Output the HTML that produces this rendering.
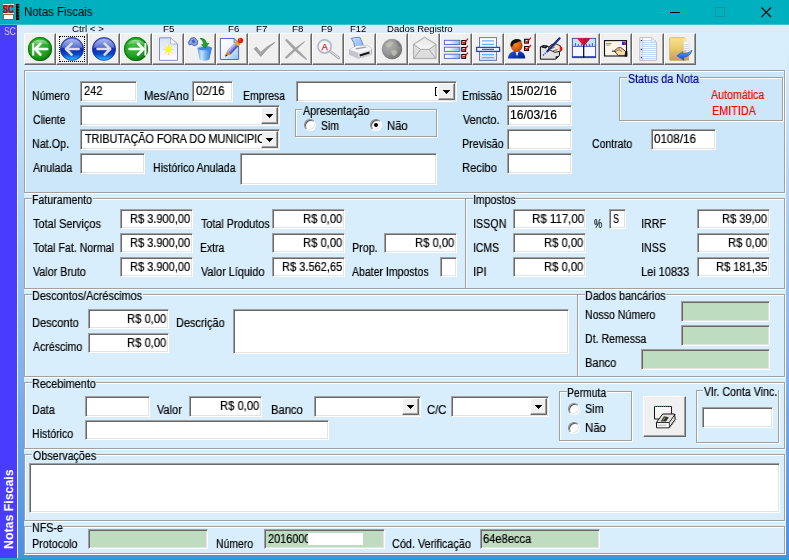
<!DOCTYPE html>
<html lang="pt-BR">
<head>
<meta charset="utf-8">
<title>Notas Fiscais</title>
<style>
*{box-sizing:border-box;margin:0;padding:0}
html,body{width:789px;height:560px;overflow:hidden}
body{position:relative;background:linear-gradient(to bottom,#d8eefc 0,#d8eefc 50px,#4a90e2 558px,#4a90e2 100%);font-family:"Liberation Sans",Arial,sans-serif;font-size:12px;color:#000;line-height:13px}
.abs,.l,.in,.gb,.gp,.tb,.rd{position:absolute}
i{font-style:normal;display:block}
#title{position:absolute;left:0;top:0;width:789px;height:25px;background:#00b0be;border-bottom:1px solid #3ebfca}
#side{position:absolute;left:0;top:25px;width:17px;height:535px;background:#4a3cff}
#side .v{position:absolute;left:1px;top:524px;transform-origin:0 0;transform:rotate(-90deg) scaleX(.95);color:#fff;font-weight:bold;font-size:13px;white-space:nowrap;line-height:15px}
#sline{position:absolute;left:17px;top:25px;width:1px;height:535px;background:#f4fafe}
#ct{position:absolute;left:24px;top:25px;width:762px;height:530px;background:#d8eefc}
#bb{position:absolute;left:0;top:558px;width:789px;height:2px;background:#00b0be;border-top:1px solid #2aa0d0}
.l{white-space:nowrap;height:13px;transform-origin:0 0;will-change:transform;-webkit-text-stroke:.2px currentColor}
.tb{top:33px;width:32px;height:32px;background:#f0f0f0;border:1px solid;border-color:#fff #696969 #696969 #fff;box-shadow:inset -1px -1px 0 #a0a0a0}
.fr{position:absolute;left:2px;top:2px;width:26px;height:26px;border:1px dotted #000}
.in{background:#fff;border:1px solid;border-color:#a0a0a0 #fff #fff #a0a0a0;box-shadow:inset 1px 1px 0 #696969,inset -1px -1px 0 #e3e3e3}
.in.g{background:#bddcc0}
.gb{border:1px solid #a0a0a0;box-shadow:1px 1px 0 #fff,inset 1px 1px 0 #fff}
.gp{height:4px}
.cbb{position:absolute;right:1px;top:1px;bottom:1px;width:17px;background:#f0f0f0;border:1px solid;border-color:#fff #696969 #696969 #fff;box-shadow:inset -1px -1px 0 #a0a0a0}
.cbb:after{content:"";position:absolute;left:4px;top:6px;width:7px;height:4px;background:linear-gradient(#000,#000) 0 0/7px 1px no-repeat,linear-gradient(#000,#000) 1px 1px/5px 1px no-repeat,linear-gradient(#000,#000) 2px 2px/3px 1px no-repeat,linear-gradient(#000,#000) 3px 3px/1px 1px no-repeat}
.brk{position:absolute;width:2px;height:9px;border:1px solid #000;border-right:0}
.ic{position:absolute;left:0;top:0;display:block}
.rd{width:12px;height:12px;border-radius:50%;background:#fff;border:1px solid;border-color:#8a8a8a #fff #fff #8a8a8a;box-shadow:inset 1px 1px 0 #5c5c5c,inset -1px -1px 0 #e4e4e4;transform:rotate(0deg)}
.rd.on:after{content:"";position:absolute;left:3px;top:3px;width:4px;height:4px;border-radius:50%;background:#000}
</style>
</head>
<body>
<div id="title"><svg style="position:absolute;left:0;top:0" width="24" height="25" viewBox="0 0 24 25"><rect x="3" y="4" width="11" height="10" fill="#00a8b6"/><path d="M3 4.5H14" stroke="#fff" stroke-width="1"/>
<text x="3" y="13.2" font-family="Liberation Sans,sans-serif" font-size="11.5" font-weight="bold" fill="#e00000" stroke="#b00000" stroke-width=".5" textLength="10.8" lengthAdjust="spacingAndGlyphs">SC</text>
<rect x="3.5" y="14.5" width="10" height="5" fill="#fff" stroke="#8c5c4c" stroke-width="1"/><path d="M3 13.6H14" stroke="#f4f4f4" stroke-width="1"/>
<rect x="16" y="4" width="3.2" height="16" fill="#000"/><path d="M17.6 5.6H19.2M17.6 8.4H19.2M17.8 11.4H19.2M17.8 14H19.2M17.4 17.6H18.4" stroke="#00b0be" stroke-width=".9"/></svg><svg style="position:absolute;left:640px;top:0" width="149" height="25" viewBox="640 0 149 25"><path d="M670 12.5H680" stroke="#000" stroke-width="1"/><rect x="715.5" y="7.5" width="9" height="9" fill="none" stroke="#0a98a4" stroke-width="1"/><path d="M761.5 7.5L771 17M771 7.5L761.5 17" stroke="#000" stroke-width="1.1"/></svg></div>
<div id="side"><span class="v">Notas Fiscais</span></div>
<div id="sline"></div>
<div id="ct"></div>
<div id="bb"></div>
<div class="tb" style="left:24px"><svg class="ic" width="29" height="29" viewBox="25 34 29 29"><defs><radialGradient id="g0" cx="0.42" cy="0.38" r="0.62"><stop offset="0" stop-color="#40c040"/><stop offset="0.6" stop-color="#25a825"/><stop offset="0.88" stop-color="#158c15"/><stop offset="1" stop-color="#0b6e0b"/></radialGradient><linearGradient id="gl0" x1="0" y1="0" x2="0" y2="1"><stop offset="0" stop-color="#fff" stop-opacity=".55"/><stop offset="1" stop-color="#fff" stop-opacity=".08"/></linearGradient></defs><circle cx="40" cy="49" r="12" fill="url(#g0)"/><circle cx="40" cy="49" r="11.6" fill="none" stroke="#0a6c0a" stroke-width=".9"/><path d="M30.8 45.5 A10 9.5 0 0 1 49.2 45.5 Q40 41.5 30.8 45.5Z" fill="url(#gl0)"/><path d="M33.2 43.2V55.6" stroke="#fff" stroke-width="2" fill="none"/><path d="M35 49H47.2M40.4 43.6L35.2 49L40.4 54.6" stroke="#fff" stroke-width="2.6" fill="none" stroke-linecap="round" stroke-linejoin="round"/></svg></div>
<div class="tb" style="left:56px"><i class="fr"></i><svg class="ic" width="29" height="29" viewBox="57 34 29 29"><defs><linearGradient id="b1" x1="0" y1="0" x2="0" y2="1"><stop offset="0" stop-color="#6078d8"/><stop offset="0.42" stop-color="#3550c4"/><stop offset="0.5" stop-color="#0c2cb0"/><stop offset="0.72" stop-color="#0c44cc"/><stop offset="0.92" stop-color="#28a8f8"/><stop offset="1" stop-color="#48d0ff"/></linearGradient><linearGradient id="bl1" x1="0" y1="0" x2="0" y2="1"><stop offset="0" stop-color="#fff" stop-opacity=".5"/><stop offset="1" stop-color="#fff" stop-opacity=".12"/></linearGradient></defs><circle cx="72" cy="49" r="11.8" fill="url(#b1)"/><circle cx="72" cy="49" r="11.4" fill="none" stroke="#1a2c9c" stroke-width=".9" stroke-opacity=".8"/><path d="M61.6 47.5 A10.5 10.2 0 0 1 82.4 47.5 Q72 50 61.6 47.5Z" fill="url(#bl1)"/><path d="M66.4 49H78.6M71.6 43.6L66 49L71.6 54.6" stroke="#dedede" stroke-width="2.6" fill="none" stroke-linecap="round" stroke-linejoin="round"/></svg></div>
<div class="tb" style="left:88px"><svg class="ic" width="29" height="29" viewBox="89 34 29 29"><defs><linearGradient id="b2" x1="0" y1="0" x2="0" y2="1"><stop offset="0" stop-color="#6078d8"/><stop offset="0.42" stop-color="#3550c4"/><stop offset="0.5" stop-color="#0c2cb0"/><stop offset="0.72" stop-color="#0c44cc"/><stop offset="0.92" stop-color="#28a8f8"/><stop offset="1" stop-color="#48d0ff"/></linearGradient><linearGradient id="bl2" x1="0" y1="0" x2="0" y2="1"><stop offset="0" stop-color="#fff" stop-opacity=".5"/><stop offset="1" stop-color="#fff" stop-opacity=".12"/></linearGradient></defs><circle cx="104" cy="49" r="11.8" fill="url(#b2)"/><circle cx="104" cy="49" r="11.4" fill="none" stroke="#1a2c9c" stroke-width=".9" stroke-opacity=".8"/><path d="M93.6 47.5 A10.5 10.2 0 0 1 114.4 47.5 Q104 50 93.6 47.5Z" fill="url(#bl2)"/><path d="M97.6 49H109.8M104.6 43.6L110.2 49L104.6 54.6" stroke="#dedede" stroke-width="2.6" fill="none" stroke-linecap="round" stroke-linejoin="round"/></svg></div>
<div class="tb" style="left:120px"><svg class="ic" width="29" height="29" viewBox="121 34 29 29"><defs><radialGradient id="g3" cx="0.42" cy="0.38" r="0.62"><stop offset="0" stop-color="#40c040"/><stop offset="0.6" stop-color="#25a825"/><stop offset="0.88" stop-color="#158c15"/><stop offset="1" stop-color="#0b6e0b"/></radialGradient><linearGradient id="gl3" x1="0" y1="0" x2="0" y2="1"><stop offset="0" stop-color="#fff" stop-opacity=".55"/><stop offset="1" stop-color="#fff" stop-opacity=".08"/></linearGradient></defs><circle cx="136" cy="49" r="12" fill="url(#g3)"/><circle cx="136" cy="49" r="11.6" fill="none" stroke="#0a6c0a" stroke-width=".9"/><path d="M126.8 45.5 A10 9.5 0 0 1 145.2 45.5 Q136 41.5 126.8 45.5Z" fill="url(#gl3)"/><path d="M145.4 43.2V55.6" stroke="#fff" stroke-width="2" fill="none"/><path d="M129.6 49H143.4M138 43.6L143.4 49L138 54.6" stroke="#fff" stroke-width="2.6" fill="none" stroke-linecap="round" stroke-linejoin="round"/></svg></div>
<div class="tb" style="left:152px"><svg class="ic" width="29" height="29" viewBox="153 34 29 29"><defs><linearGradient id="p4" x1="0" y1="0" x2="0" y2="1"><stop offset="0" stop-color="#d4e2f8"/><stop offset=".6" stop-color="#eef4fd"/><stop offset="1" stop-color="#ffffff"/></linearGradient></defs><path d="M159.5 37.8H170.5L177.5 44V60.3H159.5Z" fill="url(#p4)" stroke="#8a8cc0" stroke-width="1"/>
<path d="M170.5 37.8V44H177.5Z" fill="#f4f8ff" stroke="#a8aad0" stroke-width=".8"/>
<g stroke="#ffee00" stroke-width="1" stroke-linecap="round"><path d="M168.5 44.2V54.8M163.4 49.5H173.6M164.9 45.9L172.1 53.1M172.1 45.9L164.9 53.1"/></g>
<circle cx="168.5" cy="49.5" r="2.7" fill="#ffff00"/></svg></div>
<div class="tb" style="left:184px"><svg class="ic" width="29" height="29" viewBox="185 34 29 29"><defs><linearGradient id="k5" x1="0" y1="0" x2="1" y2="0"><stop offset="0" stop-color="#5aa0f0"/><stop offset=".3" stop-color="#c4e4ff"/><stop offset=".55" stop-color="#78b8f8"/><stop offset="1" stop-color="#2a70dc"/></linearGradient></defs><path d="M188.3 42.5L191 38.2L194.5 37.6L197.6 40.8L197.2 44.6L194.2 45.8L191.2 44.2L189.4 45Z" fill="#8aa4dc" stroke="#4a58a8" stroke-width=".9"/>
<path d="M191.5 40.5L194 39.6L195.6 42.2L193 43.4Z" fill="#3c64c8"/>
<path d="M197.4 48.2Q197 46.4 204.5 46.2Q212.2 46.4 211.8 48.4L209.4 59.4Q204.5 62 199.6 59.4Z" fill="url(#k5)"/>
<ellipse cx="204.6" cy="48.2" rx="7.2" ry="2.1" fill="#4486e6"/><path d="M197.6 48.4Q199 46.6 203 46.4" stroke="#d8ecff" stroke-width=".8" fill="none"/>
<path d="M200 38.4Q205.6 38 206.6 43.6L208.8 43.2L205 48.4L201.4 44.6L203.6 44.2Q203.4 40.6 200 38.4Z" fill="#22a030" stroke="#107018" stroke-width=".6"/></svg></div>
<div class="tb" style="left:216px"><svg class="ic" width="29" height="29" viewBox="217 34 29 29"><defs><linearGradient id="p6" x1="0" y1="0" x2="1" y2="1"><stop offset="0" stop-color="#ffffff"/><stop offset=".45" stop-color="#f0f6fd"/><stop offset="1" stop-color="#84c0ee"/></linearGradient></defs><path d="M220.4 38.5H234L238.6 43V59.5H220.4Z" fill="url(#p6)" stroke="#5868c0" stroke-width="1"/>
<path d="M234 38.5V43H238.6Z" fill="#a8d0f4" stroke="#5868c0" stroke-width=".7"/>
<path d="M227 51.1L235 42.8L238.4 46.2L230.4 54.5Z" fill="#8686d6"/>
<path d="M227 51.1L235 42.8L236.1 43.9L228.1 52.2Z" fill="#b6b6f2"/>
<path d="M229.3 53.4L237.3 45.1L238.4 46.2L230.4 54.5Z" fill="#5656a6"/>
<path d="M225.2 56.4L227 51.1L230.4 54.5Z" fill="#d89018"/>
<path d="M225.2 56.4L225.9 54.3L227.3 55.7Z" fill="#181008"/>
<path d="M235 42.8L237.1 40.7L240.5 44.1L238.4 46.2Z" fill="#f2b000"/>
<path d="M236.4 41.4L237.1 40.7L240.5 44.1L239.8 44.8Z" fill="#c88800"/>
<ellipse cx="240.5" cy="40.5" rx="2.7" ry="2.7" fill="#d81c0c"/>
<circle cx="239.8" cy="39.6" r="1.1" fill="#f8583c"/></svg></div>
<div class="tb" style="left:248px"><svg class="ic" width="29" height="29" viewBox="249 34 29 29"><defs></defs><path d="M254.2 48.7L256.3 47L260.7 52.4Q266.6 46.2 274.9 42.3Q267.6 48 260.8 56.5Z" fill="#a6a6a6" stroke="#7c7c7c" stroke-width=".55" stroke-linejoin="round"/></svg></div>
<div class="tb" style="left:280px"><svg class="ic" width="29" height="29" viewBox="281 34 29 29"><defs></defs><path d="M285.4 40.4Q285.4 38.8 287.2 39.2Q296 47.6 307.2 59L306.4 60Q294.4 51.6 285.4 40.4Z" fill="#a4a4a4"/>
<path d="M285 57.2Q293.6 48 304.6 41L305 41.8Q296.8 49.8 287 58.4Q285 58.8 285 57.2Z" fill="#a4a4a4"/></svg></div>
<div class="tb" style="left:312px"><svg class="ic" width="29" height="29" viewBox="313 34 29 29"><defs><radialGradient id="m9" cx=".5" cy=".5" r=".5"><stop offset="0" stop-color="#ffffff"/><stop offset=".7" stop-color="#f2f7fe"/><stop offset="1" stop-color="#cfe0f8"/></radialGradient></defs><path d="M330 51.2L338.6 57.8" stroke="#9898a4" stroke-width="2.6" stroke-linecap="round"/>
<path d="M330.4 51.4L338.4 57.6" stroke="#ececf4" stroke-width="1.2" stroke-linecap="round"/>
<circle cx="324.6" cy="46.4" r="6.7" fill="url(#m9)" stroke="#b4b4bc" stroke-width="1.5"/>
<text x="324.7" y="49.8" font-family="Liberation Sans,sans-serif" font-size="9" fill="#f00" stroke="#f00" stroke-width=".25" text-anchor="middle">A</text></svg></div>
<div class="tb" style="left:344px"><svg class="ic" width="29" height="29" viewBox="345 34 29 29"><defs><linearGradient id="pp10" x1="0" y1="0" x2="1" y2="1"><stop offset="0" stop-color="#c8defc"/><stop offset="1" stop-color="#7cb0f4"/></linearGradient></defs><path d="M351.2 38.4Q353.6 37.2 360 37.4Q361.8 41.6 363.6 46.4L354.8 48Q354.6 42 351.2 38.4Z" fill="url(#pp10)" stroke="#5a6ad0" stroke-width=".8"/>
<path d="M349.4 49.6L357 45.8L367.2 45.4L371.6 49L371.4 53.8L358.4 58.2L349.6 54.4Z" fill="#e4e4e8" stroke="#9c9ca4" stroke-width=".7"/>
<path d="M349.4 49.6L358.4 53L371.6 49L367.2 45.4L357 45.8Z" fill="#f6f6f8"/>
<path d="M355.2 48.2L365.6 46.6L366.8 47.6L356.6 49.4Z" fill="#a0a0a8"/>
<path d="M359.4 54.6L369.4 51.6L369.6 53.6L360 56.6Z" fill="#101010"/>
<path d="M349.6 54.4L358.4 58.2V53L349.4 49.6Z" fill="#c4c4cc"/>
<path d="M361 57.4L371.6 54L371.8 55.2L362 58.6Z" fill="#d8d8dc"/></svg></div>
<div class="tb" style="left:376px"><svg class="ic" width="29" height="29" viewBox="377 34 29 29"><defs><radialGradient id="gb11" cx=".38" cy=".36" r=".72"><stop offset="0" stop-color="#b0b0b0"/><stop offset=".55" stop-color="#969696"/><stop offset="1" stop-color="#6c6c6c"/></radialGradient></defs><circle cx="392" cy="49" r="10.3" fill="url(#gb11)"/>
<path d="M386 44.2L389.4 41.4L393.6 42.2L391.6 45.6L388.4 47.6L386.4 47Z" fill="#bcbcb4"/>
<path d="M391 50.8L395.6 49.8L397.2 52.6L394.2 56.4L392.2 54.6Z" fill="#b8b8b0"/>
<path d="M395.5 40.6Q400.6 43 401.6 47.6L398.4 46.4Z" fill="#7c7c7c"/></svg></div>
<div class="tb" style="left:408px"><svg class="ic" width="29" height="29" viewBox="409 34 29 29"><defs></defs><path d="M413.6 44.2L424.6 37.2L436 44.2V58.6H413.6Z" fill="#dedede" stroke="#a8a8a8" stroke-width="1" stroke-linejoin="round"/>
<path d="M415.4 44.4L424.6 38.8L434.4 44.6L429 49.2H420.6Z" fill="#ececec"/>
<path d="M415.4 43.4Q424 46 434.2 45.2L429 49.2H420.6Z" fill="#f4f4f4"/>
<path d="M413.8 44.4L420.6 49.4H429L435.8 44.6M420.6 49.4L414 58.4M429 49.4L435.6 58.4" fill="none" stroke="#a8a8a8" stroke-width="1"/></svg></div>
<div class="tb" style="left:440px"><svg class="ic" width="29" height="29" viewBox="441 34 29 29"><defs><linearGradient id="br13" x1="0" y1="0" x2="1" y2="0"><stop offset="0" stop-color="#ffffff"/><stop offset=".35" stop-color="#e8f2fd"/><stop offset="1" stop-color="#86baf0"/></linearGradient></defs><rect x="444.4" y="40.3" width="15.4" height="4.2" fill="url(#br13)" stroke="#4a66c4" stroke-width=".9"/><rect x="461.8" y="40.599999999999994" width="3.8" height="3.8" fill="#fff" stroke="#000" stroke-width="1.1"/><path d="M462.6 41.9L464 43.5L468 38.699999999999996" fill="none" stroke="#f00000" stroke-width="1.2"/><rect x="444.4" y="47.2" width="15.4" height="4.2" fill="url(#br13)" stroke="#4a66c4" stroke-width=".9"/><rect x="461.8" y="47.5" width="3.8" height="3.8" fill="#fff" stroke="#000" stroke-width="1.1"/><path d="M462.6 48.800000000000004L464 50.400000000000006L468 45.6" fill="none" stroke="#f00000" stroke-width="1.2"/><rect x="444.4" y="54.2" width="15.4" height="4.2" fill="url(#br13)" stroke="#4a66c4" stroke-width=".9"/><rect x="461.8" y="54.5" width="3.8" height="3.8" fill="#fff" stroke="#000" stroke-width="1.1"/><path d="M462.6 55.800000000000004L464 57.400000000000006L468 52.6" fill="none" stroke="#f00000" stroke-width="1.2"/></svg></div>
<div class="tb" style="left:472px"><svg class="ic" width="29" height="29" viewBox="473 34 29 29"><defs><linearGradient id="p14" x1="0" y1="0" x2="0" y2="1"><stop offset="0" stop-color="#ffffff"/><stop offset=".5" stop-color="#f0f6fd"/><stop offset="1" stop-color="#cfe2f6"/></linearGradient></defs><rect x="479.5" y="37.6" width="17" height="22.8" fill="url(#p14)" stroke="#7476b4" stroke-width="1"/>
<g stroke="#6cb0f4" stroke-width="1.2"><path d="M482 40.8H494M482 44.3H494M482 54.6H494M482 57.7H494"/></g>
<rect x="476.6" y="47.4" width="23" height="4" fill="#f4f6fa" stroke="#2c48a8" stroke-width="1.3"/>
<path d="M482 49.4H494" stroke="#3c62c8" stroke-width="1.3"/></svg></div>
<div class="tb" style="left:504px"><svg class="ic" width="29" height="29" viewBox="505 34 29 29"><defs><radialGradient id="hd15" cx=".4" cy=".4" r=".7"><stop offset="0" stop-color="#f88a1c"/><stop offset=".6" stop-color="#dc5c08"/><stop offset="1" stop-color="#8c2c00"/></radialGradient><linearGradient id="bd15" x1="0" y1="0" x2="1" y2="1"><stop offset="0" stop-color="#3060e0"/><stop offset=".5" stop-color="#1038c0"/><stop offset="1" stop-color="#041c84"/></linearGradient></defs><path d="M508 58.6Q508 53.4 513 51.6L516.6 50.4L520.6 51.6Q525.4 53.4 525.2 58.6Z" fill="url(#bd15)"/>
<path d="M515.4 51L517 56.6L518.8 51Z" fill="#f4f4f8"/>
<ellipse cx="516.6" cy="45.6" rx="5.9" ry="6.3" fill="url(#hd15)"/>
<path d="M510.6 46.4Q509.8 40.4 515 39.2Q519.6 38.2 522 41.4Q518.4 40.6 516.4 43Q513.4 42.8 512.4 46.6Z" fill="#101010"/><rect x="524.6" y="39.3" width="3.8" height="3.8" fill="#fff" stroke="#000" stroke-width="1.1"/><path d="M525.2 40.699999999999996L526.8 42.3L531 37.699999999999996" fill="none" stroke="#f00000" stroke-width="1.2"/><rect x="524.6" y="46.6" width="3.8" height="3.8" fill="#fff" stroke="#000" stroke-width="1.1"/><path d="M525.2 48.0L526.8 49.6L531 45.0" fill="none" stroke="#f00000" stroke-width="1.2"/></svg></div>
<div class="tb" style="left:536px"><svg class="ic" width="29" height="29" viewBox="537 34 29 29"><defs></defs><path d="M540.4 46.8L544 45.4L557.6 49.6L559.4 51.6V55.6L555.6 59.2H540.4Z" fill="#e2e2e2" stroke="#101010" stroke-width="1"/>
<path d="M555.4 59L555.6 56.4L559 55.8Z" fill="#101010"/>
<path d="M541.6 46.6L545.6 47.6L547.4 45.6" fill="none" stroke="#101010" stroke-width="1.6"/>
<path d="M548.6 47.4Q551.2 43.4 555.6 43.8L560.4 45.8L561 51L555 52.4L549.4 49.8Z" fill="#f6e4d0" stroke="#181818" stroke-width=".9"/>
<path d="M550.4 48.6L554.6 47.4M551.4 46L555.4 45.6M553 51L557.6 49.6" stroke="#303030" stroke-width=".7" fill="none"/>
<path d="M559.6 46.2Q562.8 46.6 562.4 49.6Q562 51.6 559.8 51.4Z" fill="#e81010"/>
<path d="M559.6 38.2L547.4 51.2" stroke="#0c1470" stroke-width="2" stroke-linecap="round"/><path d="M559.2 38.8L548 50.8" stroke="#3850d8" stroke-width=".7"/>
<path d="M547.4 51.2L542.4 56" stroke="#2840ff" stroke-width="1.3" stroke-dasharray="1.4 1"/></svg></div>
<div class="tb" style="left:568px"><svg class="ic" width="29" height="29" viewBox="569 34 29 29"><defs></defs><rect x="572.4" y="38.4" width="23.2" height="18.6" fill="#f6f8fe" stroke="#3848b8" stroke-width="1"/>
<rect x="572.9" y="38.9" width="22.2" height="7.2" fill="#c4e0fa"/>
<g stroke="#3c50c0" stroke-width=".9"><path d="M575.4 43V46.4M578.4 44V46.4M581.4 44V46.4M586.4 44V46.4M589.4 44V46.4M592.4 43V46.4M572.9 46.4H595.1"/></g>
<path d="M572 57.2H596" stroke="#3040b0" stroke-width="1.8"/>
<path d="M577 38.2H590.4L583.7 46.2Z" fill="#e81030"/>
<path d="M583.7 38.2H590.4L583.7 46.2Z" fill="#b01840"/>
<path d="M583.7 45.6V57.8" stroke="#000" stroke-width="1.2"/></svg></div>
<div class="tb" style="left:600px"><svg class="ic" width="29" height="29" viewBox="601 34 29 29"><defs></defs><rect x="604.5" y="40.6" width="22" height="15.4" fill="#fff6ea" stroke="#101010" stroke-width="1.1"/>
<path d="M606 43.4H611.6M606 45H610.4" stroke="#909090" stroke-width="1"/>
<rect x="622" y="41.6" width="3.8" height="3.4" fill="#2828e0"/><rect x="624" y="41.8" width="1.4" height="2.6" fill="#e82020"/>
<path d="M612 51.2H616" stroke="#101010" stroke-width="1"/>
<path d="M614.8 50.6Q617.6 46.8 620.8 47.6L625.6 51.4L626.6 55.6L618.6 55.6Q615.4 53.6 614.8 50.6Z" fill="#f8d8a4" stroke="#101010" stroke-width=".8"/>
<path d="M625.4 51.2H627.4V56.4H624.4Z" fill="#101010"/>
<path d="M616.4 51.2L619 49.6L621.6 51.4" fill="none" stroke="#404040" stroke-width=".7"/></svg></div>
<div class="tb" style="left:632px"><svg class="ic" width="29" height="29" viewBox="633 34 29 29"><defs></defs><path d="M639.8 37.6H651.6L656.6 42.4V60.4H639.8Z" fill="#fff" stroke="#bcbcbc" stroke-width="1"/>
<path d="M640.4 40.6H656M640.4 42.6H656M640.4 44.6H656M640.4 46.6H656M640.4 48.6H656M640.4 50.6H656M640.4 52.6H656M640.4 54.6H656M640.4 56.6H656M640.4 58.6H656" stroke="#b4d0f0" stroke-width=".9"/>
<path d="M651.6 37.6V42.4H656.6Z" fill="#f0f0f0" stroke="#c4c4c4" stroke-width=".7"/>
<path d="M642.6 38V60" stroke="#f0b8a8" stroke-width=".8"/>
<circle cx="641.4" cy="40.6" r=".7" fill="#202020"/><circle cx="641.4" cy="49.4" r=".7" fill="#202020"/><circle cx="641.4" cy="57.6" r=".7" fill="#202020"/></svg></div>
<div class="tb" style="left:664px"><svg class="ic" width="29" height="29" viewBox="665 34 29 29"><defs><linearGradient id="f20" x1="0" y1="0" x2="0" y2="1"><stop offset="0" stop-color="#f8e488"/><stop offset=".5" stop-color="#e8c870"/><stop offset="1" stop-color="#c89c54"/></linearGradient><linearGradient id="f20b" x1="0" y1="0" x2="0" y2="1"><stop offset="0" stop-color="#e4c46c"/><stop offset="1" stop-color="#c89c54"/></linearGradient><linearGradient id="a20" x1="0" y1="0" x2="0" y2="1"><stop offset="0" stop-color="#60b0ff"/><stop offset="1" stop-color="#0848d0"/></linearGradient></defs><path d="M669.6 38.6Q669.6 37.6 670.6 37.6H684.4L685.4 38.6V60.4H670.6Q669.6 60.4 669.6 59.4Z" fill="url(#f20)" stroke="#c8a45c" stroke-width=".6"/>
<path d="M683.4 38.4H686.6V46H683.4Z" fill="#fbe6a8"/>
<path d="M684 41.4H686.8L688.8 43.4V56H684Z" fill="#fff" stroke="#d8d8e4" stroke-width=".5"/>
<path d="M684.4 44.6H688.4M684.4 46.6H688.4M684.4 48.6H688.4M684.4 50.6H688.4M684.4 52.6H688.4" stroke="#a8c8f0" stroke-width=".8"/>
<path d="M681 52.4L685 50.4L689 53.6V60.4H681Z" fill="url(#f20b)"/>
<path d="M692 50Q691 56.4 683.4 57.4L684 60.2L676.8 55.8L682.6 51.6L683 53.8Q688.4 54 692 50Z" fill="url(#a20)" stroke="#0c44c0" stroke-width=".5"/></svg></div>
<div class="gb" style="left:24px;top:70px;width:761px;height:123px;background:#cce7fa;"></div>
<div class="in " style="left:80px;top:81px;width:57px;height:21px"></div>
<div class="in " style="left:192px;top:81px;width:41px;height:21px"></div>
<div class="in" style="left:296px;top:81px;width:161px;height:21px"><i class="cbb"></i></div>
<i class="brk" style="left:435px;top:87px"></i>
<div class="in " style="left:507px;top:81px;width:65px;height:21px"></div>
<div class="gb" style="left:619px;top:77px;width:164px;height:44px;"></div>
<i class="gp" style="left:627px;top:75px;width:73px;background:#cce7fa"></i>
<div class="in" style="left:80px;top:105px;width:200px;height:21px"><i class="cbb"></i></div>
<div class="gb" style="left:295px;top:109px;width:142px;height:28px;"></div>
<i class="gp" style="left:302px;top:107px;width:68px;background:#cce7fa"></i>
<i class="rd" style="left:304px;top:119px"></i>
<i class="rd on" style="left:370px;top:119px"></i>
<div class="in " style="left:507px;top:105px;width:65px;height:21px"></div>
<div class="in" style="left:80px;top:129px;width:200px;height:21px"><i class="cbb"></i></div>
<div class="in " style="left:507px;top:129px;width:65px;height:21px"></div>
<div class="in " style="left:651px;top:129px;width:65px;height:21px"></div>
<div class="in " style="left:80px;top:153px;width:65px;height:21px"></div>
<div class="in " style="left:240px;top:153px;width:197px;height:32px"></div>
<div class="in " style="left:507px;top:153px;width:65px;height:21px"></div>
<div class="gb" style="left:24px;top:198px;width:442px;height:91px;"></div>
<div class="gb" style="left:465px;top:198px;width:320px;height:91px;"></div>
<i class="gp" style="left:32px;top:196px;width:61px;background:#d8eefc"></i>
<i class="gp" style="left:473px;top:196px;width:43px;background:#d8eefc"></i>
<div class="in " style="left:120px;top:209px;width:73px;height:20px"></div>
<div class="in " style="left:272px;top:209px;width:73px;height:20px"></div>
<div class="in " style="left:120px;top:233px;width:73px;height:20px"></div>
<div class="in " style="left:272px;top:233px;width:73px;height:20px"></div>
<div class="in " style="left:120px;top:257px;width:73px;height:20px"></div>
<div class="in " style="left:272px;top:257px;width:73px;height:20px"></div>
<div class="in " style="left:384px;top:233px;width:73px;height:20px"></div>
<div class="in " style="left:440px;top:257px;width:17px;height:20px"></div>
<div class="in " style="left:513px;top:209px;width:73px;height:20px"></div>
<div class="in " style="left:697px;top:209px;width:73px;height:20px"></div>
<div class="in " style="left:513px;top:233px;width:73px;height:20px"></div>
<div class="in " style="left:697px;top:233px;width:73px;height:20px"></div>
<div class="in " style="left:513px;top:257px;width:73px;height:20px"></div>
<div class="in " style="left:697px;top:257px;width:73px;height:20px"></div>
<div class="in " style="left:609px;top:209px;width:17px;height:20px"></div>
<div class="gb" style="left:24px;top:294px;width:554px;height:83px;"></div>
<div class="gb" style="left:577px;top:294px;width:208px;height:83px;"></div>
<i class="gp" style="left:32px;top:292px;width:111px;background:#d8eefc"></i>
<i class="gp" style="left:585px;top:292px;width:81px;background:#d8eefc"></i>
<div class="in " style="left:88px;top:309px;width:81px;height:20px"></div>
<div class="in " style="left:88px;top:333px;width:81px;height:20px"></div>
<div class="in " style="left:233px;top:309px;width:336px;height:45px"></div>
<div class="in g" style="left:681px;top:301px;width:89px;height:21px"></div>
<div class="in g" style="left:681px;top:325px;width:89px;height:21px"></div>
<div class="in g" style="left:641px;top:349px;width:129px;height:21px"></div>
<div class="gb" style="left:24px;top:382px;width:761px;height:67px;"></div>
<i class="gp" style="left:32px;top:380px;width:64px;background:#d8eefc"></i>
<div class="in " style="left:85px;top:396px;width:65px;height:21px"></div>
<div class="in " style="left:189px;top:396px;width:73px;height:21px"></div>
<div class="in" style="left:314px;top:396px;width:107px;height:21px"><i class="cbb"></i></div>
<div class="in" style="left:451px;top:396px;width:98px;height:21px"><i class="cbb"></i></div>
<div class="in " style="left:85px;top:420px;width:244px;height:20px"></div>
<div class="gb" style="left:559px;top:391px;width:73px;height:50px;"></div>
<i class="gp" style="left:567px;top:389px;width:40px;background:#d8eefc"></i>
<i class="rd" style="left:568px;top:403px"></i>
<i class="rd" style="left:568px;top:422px"></i>
<div class="tb" style="left:643px;top:396px;width:43px;height:41px"><svg class="ic" width="41" height="39" viewBox="644 397 41 39"><path d="M654.5 406.5H671.5V419H654.5Z" fill="#f6f6f6" stroke="#101010" stroke-width="1"/>
<path d="M655 406.4H671" stroke="#109080" stroke-width="1.4" stroke-dasharray="1 1"/>
<path d="M671.6 407V414" stroke="#8020a0" stroke-width=".8" stroke-dasharray="1 1"/>
<path d="M656.4 422.6L662.6 414H674.6L675.2 419.4L669 427.8H656.6Z" fill="#e4e4e4" stroke="#101010" stroke-width="1"/>
<path d="M656.4 422.6H669.2L675 414.4M669.2 422.6V427.6" fill="none" stroke="#101010" stroke-width=".9"/>
<path d="M657 423.2H668.8V427.2H657Z" fill="#f6f6f6"/>
<path d="M658 425.2H666" stroke="#b8b8b8" stroke-width="1"/>
<path d="M660.6 421.4L664 416.2L668.8 417.2L666 421.6Z" fill="#303030"/><path d="M663 420.6L665 417.4" stroke="#d0d060" stroke-width=".8"/>
<path d="M669.8 428L676.6 419.6" stroke="#808080" stroke-width=".8" stroke-dasharray="1 1"/></svg></div>
<div class="gb" style="left:696px;top:390px;width:83px;height:53px;"></div>
<i class="gp" style="left:703px;top:388px;width:75px;background:#d8eefc"></i>
<div class="in " style="left:702px;top:407px;width:71px;height:21px"></div>
<div class="gb" style="left:24px;top:454px;width:761px;height:67px;"></div>
<i class="gp" style="left:32px;top:452px;width:64px;background:#d8eefc"></i>
<div class="in " style="left:29px;top:463px;width:751px;height:50px"></div>
<div class="gb" style="left:24px;top:526px;width:761px;height:28px;"></div>
<i class="gp" style="left:32px;top:524px;width:31px;background:#d8eefc"></i>
<div class="in g" style="left:88px;top:529px;width:120px;height:20px"></div>
<div class="in g" style="left:264px;top:529px;width:121px;height:20px"></div>
<div class="in g" style="left:480px;top:529px;width:120px;height:20px"></div>
<span class="l" id="t0" style="left:23.80px;top:6.40px;transform:scaleX(0.9499);-webkit-text-stroke:0;">Notas Fiscais</span>
<span class="l" id="t1" style="left:3.89px;top:25.00px;transform:scaleX(0.7712);color:#d6cef4;-webkit-text-stroke:0;font-size:11px;">SC</span>
<span class="l" id="t2" style="left:72.00px;top:23.50px;transform:scaleX(1.0797);-webkit-text-stroke:0;font-size:9px;line-height:10px;height:10px;">Ctrl &lt; &gt;</span>
<span class="l" id="t3" style="left:163.49px;top:23.50px;transform:scaleX(1.0844);-webkit-text-stroke:0;font-size:9px;line-height:10px;height:10px;">F5</span>
<span class="l" id="t4" style="left:228.21px;top:23.50px;transform:scaleX(1.0700);-webkit-text-stroke:0;font-size:9px;line-height:10px;height:10px;">F6</span>
<span class="l" id="t5" style="left:256.23px;top:23.50px;transform:scaleX(1.0808);-webkit-text-stroke:0;font-size:9px;line-height:10px;height:10px;">F7</span>
<span class="l" id="t6" style="left:292.20px;top:23.50px;transform:scaleX(1.0718);-webkit-text-stroke:0;font-size:9px;line-height:10px;height:10px;">F8</span>
<span class="l" id="t7" style="left:321.21px;top:23.50px;transform:scaleX(1.0832);-webkit-text-stroke:0;font-size:9px;line-height:10px;height:10px;">F9</span>
<span class="l" id="t8" style="left:350.27px;top:23.50px;transform:scaleX(1.0525);-webkit-text-stroke:0;font-size:9px;line-height:10px;height:10px;">F12</span>
<span class="l" id="t9" style="left:387.26px;top:23.50px;transform:scaleX(1.0580);-webkit-text-stroke:0;font-size:9px;line-height:10px;height:10px;">Dados Registro</span>
<span class="l" id="t10" style="left:32.10px;top:90.00px;transform:scaleX(0.8844);">Número</span>
<span class="l" id="t11" style="left:84.46px;top:85.00px;transform:scaleX(0.9232);">242</span>
<span class="l" id="t12" style="left:144.08px;top:90.00px;transform:scaleX(0.9463);">Mes/Ano</span>
<span class="l" id="t13" style="left:196.01px;top:85.00px;transform:scaleX(0.9503);">02/16</span>
<span class="l" id="t14" style="left:243.32px;top:90.00px;transform:scaleX(0.8763);">Empresa</span>
<span class="l" id="t15" style="left:462.12px;top:90.00px;transform:scaleX(0.8724);">Emissão</span>
<span class="l" id="t16" style="left:509.83px;top:85.00px;transform:scaleX(1.0021);">15/02/16</span>
<span class="l" id="t17" style="left:627.83px;top:73.00px;transform:scaleX(0.8925);color:#000080;">Status da Nota</span>
<span class="l" id="t18" style="left:710.52px;top:89.00px;transform:scaleX(0.8874);color:#f00;">Automática</span>
<span class="l" id="t19" style="left:712.10px;top:105.00px;transform:scaleX(0.8992);color:#f00;">EMITIDA</span>
<span class="l" id="t20" style="left:32.90px;top:114.00px;transform:scaleX(0.8693);">Cliente</span>
<span class="l" id="t21" style="left:303.23px;top:105.00px;transform:scaleX(0.8967);">Apresentação</span>
<span class="l" id="t22" style="left:320.58px;top:120.00px;transform:scaleX(0.8675);">Sim</span>
<span class="l" id="t23" style="left:387.28px;top:120.00px;transform:scaleX(0.9374);">Não</span>
<span class="l" id="t24" style="left:462.54px;top:114.00px;transform:scaleX(0.9116);">Vencto.</span>
<span class="l" id="t25" style="left:510.08px;top:109.00px;transform:scaleX(1.0048);">16/03/16</span>
<span class="l" id="t26" style="left:31.88px;top:138.00px;transform:scaleX(0.8972);">Nat.Op.</span>
<div class="abs" style="left:82px;top:131px;width:180px;height:17px;overflow:hidden"><span class="l" id="t27" style="left:2.79px;top:2.00px;transform:scaleX(0.9013);">TRIBUTAÇÃO FORA DO MUNICIPIO</span></div>
<span class="l" id="t28" style="left:461.88px;top:138.00px;transform:scaleX(0.8926);">Previsão</span>
<span class="l" id="t29" style="left:591.90px;top:138.00px;transform:scaleX(0.8753);">Contrato</span>
<span class="l" id="t30" style="left:653.61px;top:133.00px;transform:scaleX(0.9652);">0108/16</span>
<span class="l" id="t31" style="left:33.23px;top:162.00px;transform:scaleX(0.8937);">Anulada</span>
<span class="l" id="t32" style="left:152.70px;top:162.00px;transform:scaleX(0.8841);">Histórico Anulada</span>
<span class="l" id="t33" style="left:461.90px;top:162.00px;transform:scaleX(0.9330);">Recibo</span>
<span class="l" id="t34" style="left:32.12px;top:194.00px;transform:scaleX(0.8835);">Faturamento</span>
<span class="l" id="t35" style="left:473.02px;top:194.00px;transform:scaleX(0.8746);">Impostos</span>
<span class="l" id="t36" style="left:33.19px;top:218.00px;transform:scaleX(0.9089);">Total Serviços</span>
<span class="l" id="t37" style="left:130.10px;top:213.00px;transform:scaleX(0.9195);">R$ 3.900,00</span>
<span class="l" id="t38" style="left:200.59px;top:218.00px;transform:scaleX(0.8947);">Total Produtos</span>
<span class="l" id="t39" style="left:302.50px;top:213.00px;transform:scaleX(0.9351);">R$ 0,00</span>
<span class="l" id="t40" style="left:33.24px;top:242.00px;transform:scaleX(0.8855);">Total Fat. Normal</span>
<span class="l" id="t41" style="left:130.10px;top:237.00px;transform:scaleX(0.9195);">R$ 3.900,00</span>
<span class="l" id="t42" style="left:200.32px;top:242.00px;transform:scaleX(0.8692);">Extra</span>
<span class="l" id="t43" style="left:302.50px;top:237.00px;transform:scaleX(0.9351);">R$ 0,00</span>
<span class="l" id="t44" style="left:33.14px;top:266.00px;transform:scaleX(0.8908);">Valor Bruto</span>
<span class="l" id="t45" style="left:130.10px;top:261.00px;transform:scaleX(0.9195);">R$ 3.900,00</span>
<span class="l" id="t46" style="left:201.14px;top:266.00px;transform:scaleX(0.9080);">Valor Líquido</span>
<span class="l" id="t47" style="left:282.30px;top:261.00px;transform:scaleX(0.9210);">R$ 3.562,65</span>
<span class="l" id="t48" style="left:351.88px;top:242.00px;transform:scaleX(0.8960);">Prop.</span>
<span class="l" id="t49" style="left:414.70px;top:237.00px;transform:scaleX(0.9351);">R$ 0,00</span>
<span class="l" id="t50" style="left:352.32px;top:266.00px;transform:scaleX(0.8765);">Abater Impostos</span>
<span class="l" id="t51" style="left:473.16px;top:218.00px;transform:scaleX(0.8962);">ISSQN</span>
<span class="l" id="t52" style="left:532.10px;top:213.00px;transform:scaleX(0.9555);">R$ 117,00</span>
<span class="l" id="t53" style="left:641.46px;top:218.00px;transform:scaleX(0.8913);">IRRF</span>
<span class="l" id="t54" style="left:722.30px;top:213.00px;transform:scaleX(0.9250);">R$ 39,00</span>
<span class="l" id="t55" style="left:473.02px;top:242.00px;transform:scaleX(0.8701);">ICMS</span>
<span class="l" id="t56" style="left:544.10px;top:237.00px;transform:scaleX(0.9351);">R$ 0,00</span>
<span class="l" id="t57" style="left:640.52px;top:242.00px;transform:scaleX(0.8941);">INSS</span>
<span class="l" id="t58" style="left:728.30px;top:237.00px;transform:scaleX(0.9351);">R$ 0,00</span>
<span class="l" id="t59" style="left:473.26px;top:266.00px;transform:scaleX(0.9373);">IPI</span>
<span class="l" id="t60" style="left:544.10px;top:261.00px;transform:scaleX(0.9351);">R$ 0,00</span>
<span class="l" id="t61" style="left:640.70px;top:266.00px;transform:scaleX(0.9147);">Lei 10833</span>
<span class="l" id="t62" style="left:716.10px;top:261.00px;transform:scaleX(0.9248);">R$ 181,35</span>
<span class="l" id="t63" style="left:593.82px;top:218.00px;transform:scaleX(0.7563);">%</span>
<span class="l" id="t64" style="left:612.75px;top:213.00px;transform:scaleX(0.7568);">S</span>
<span class="l" id="t65" style="left:31.50px;top:289.50px;transform:scaleX(0.9021);">Descontos/Acréscimos</span>
<span class="l" id="t66" style="left:584.50px;top:289.50px;transform:scaleX(0.8951);">Dados bancários</span>
<span class="l" id="t67" style="left:31.90px;top:316.50px;transform:scaleX(0.9230);">Desconto</span>
<span class="l" id="t68" style="left:126.70px;top:313.00px;transform:scaleX(0.9351);">R$ 0,00</span>
<span class="l" id="t69" style="left:33.12px;top:340.50px;transform:scaleX(0.8800);">Acréscimo</span>
<span class="l" id="t70" style="left:126.70px;top:337.00px;transform:scaleX(0.9351);">R$ 0,00</span>
<span class="l" id="t71" style="left:175.70px;top:316.50px;transform:scaleX(0.9109);">Descrição</span>
<span class="l" id="t72" style="left:584.70px;top:309.00px;transform:scaleX(0.8796);">Nosso Número</span>
<span class="l" id="t73" style="left:584.72px;top:333.00px;transform:scaleX(0.8819);">Dt. Remessa</span>
<span class="l" id="t74" style="left:584.50px;top:356.50px;transform:scaleX(0.9204);">Banco</span>
<span class="l" id="t75" style="left:31.90px;top:377.70px;transform:scaleX(0.9026);">Recebimento</span>
<span class="l" id="t76" style="left:31.90px;top:404.30px;transform:scaleX(0.8960);">Data</span>
<span class="l" id="t77" style="left:156.74px;top:404.30px;transform:scaleX(0.9110);">Valor</span>
<span class="l" id="t78" style="left:219.50px;top:400.00px;transform:scaleX(0.9351);">R$ 0,00</span>
<span class="l" id="t79" style="left:270.50px;top:404.30px;transform:scaleX(0.9350);">Banco</span>
<span class="l" id="t80" style="left:427.42px;top:404.30px;transform:scaleX(0.9382);">C/C</span>
<span class="l" id="t81" style="left:31.70px;top:428.00px;transform:scaleX(0.8814);">Histórico</span>
<span class="l" id="t82" style="left:567.30px;top:387.00px;transform:scaleX(0.8614);">Permuta</span>
<span class="l" id="t83" style="left:585.43px;top:402.60px;transform:scaleX(0.9053);">Sim</span>
<span class="l" id="t84" style="left:584.68px;top:422.00px;transform:scaleX(0.9545);">Não</span>
<span class="l" id="t85" style="left:703.86px;top:386.40px;transform:scaleX(0.8879);">Vlr. Conta Vinc.</span>
<span class="l" id="t86" style="left:32.99px;top:449.60px;transform:scaleX(0.8937);">Observações</span>
<span class="l" id="t87" style="left:32.14px;top:521.60px;transform:scaleX(0.8916);">NFS-e</span>
<span class="l" id="t88" style="left:32.08px;top:537.60px;transform:scaleX(0.8968);">Protocolo</span>
<span class="l" id="t89" style="left:215.50px;top:537.60px;transform:scaleX(0.8687);">Número</span>
<span class="l" id="t90" style="left:268.46px;top:532.80px;transform:scaleX(0.9101);">2016000</span>
<span class="l" id="t91" style="left:391.82px;top:537.60px;transform:scaleX(0.9029);">Cód. Verificação</span>
<span class="l" id="t92" style="left:482.97px;top:532.80px;transform:scaleX(0.9291);">64e8ecca</span>
<i class="abs" style="left:308px;top:533px;width:55px;height:12px;background:#fff"></i>
</body>
</html>
